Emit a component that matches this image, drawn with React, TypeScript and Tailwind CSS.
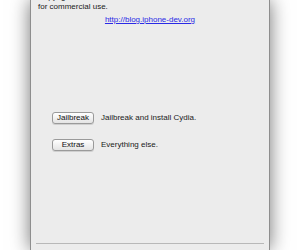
export default function App() {
  return (
    <div className="w-[300px] h-[250px] overflow-hidden bg-white flex justify-center" style={{ fontFamily: '"Liberation Sans", Arial, sans-serif' }}>
      <div className="w-[240px] h-[250px] bg-[#ececec] border-x border-[#8e8e8e] shadow-[0_0_18px_rgba(0,0,0,0.55)] flex flex-col">
        <div className="-mt-[8px] px-[7px] text-[8px] leading-[10px] text-[#1a1a1a]">
          <p className="whitespace-nowrap">Copyright the iPhone Dev-Team, released free, not to be sold</p>
          <p>for commercial use.</p>
        </div>
        <div className="mt-[3px] text-center text-[8px] leading-[10px]">
          <span className="text-[#2a2ae6] underline">http://blog.iphone-dev.org</span>
        </div>

        <div className="mt-[87px] pl-[21px] flex flex-col gap-[15px] text-[8px] text-[#1a1a1a]">
          <div className="flex items-center gap-[7px]">
            <button className="w-[42px] h-[12px] rounded-[3px] border border-[#9a9a9a] bg-gradient-to-b from-white to-[#e4e4e4] shadow-[0_1px_0_rgba(0,0,0,0.12)] text-[8px] leading-[10px] text-[#111]">
              Jailbreak
            </button>
            <span>Jailbreak and install Cydia.</span>
          </div>
          <div className="flex items-center gap-[7px]">
            <button className="w-[42px] h-[12px] rounded-[3px] border border-[#9a9a9a] bg-gradient-to-b from-white to-[#e4e4e4] shadow-[0_1px_0_rgba(0,0,0,0.12)] text-[8px] leading-[10px] text-[#111]">
              Extras
            </button>
            <span>Everything else.</span>
          </div>
        </div>

        <div className="mt-auto mb-[6px] mx-[5px] h-px bg-[#b8b8b8]" />
      </div>
    </div>
  )
}
